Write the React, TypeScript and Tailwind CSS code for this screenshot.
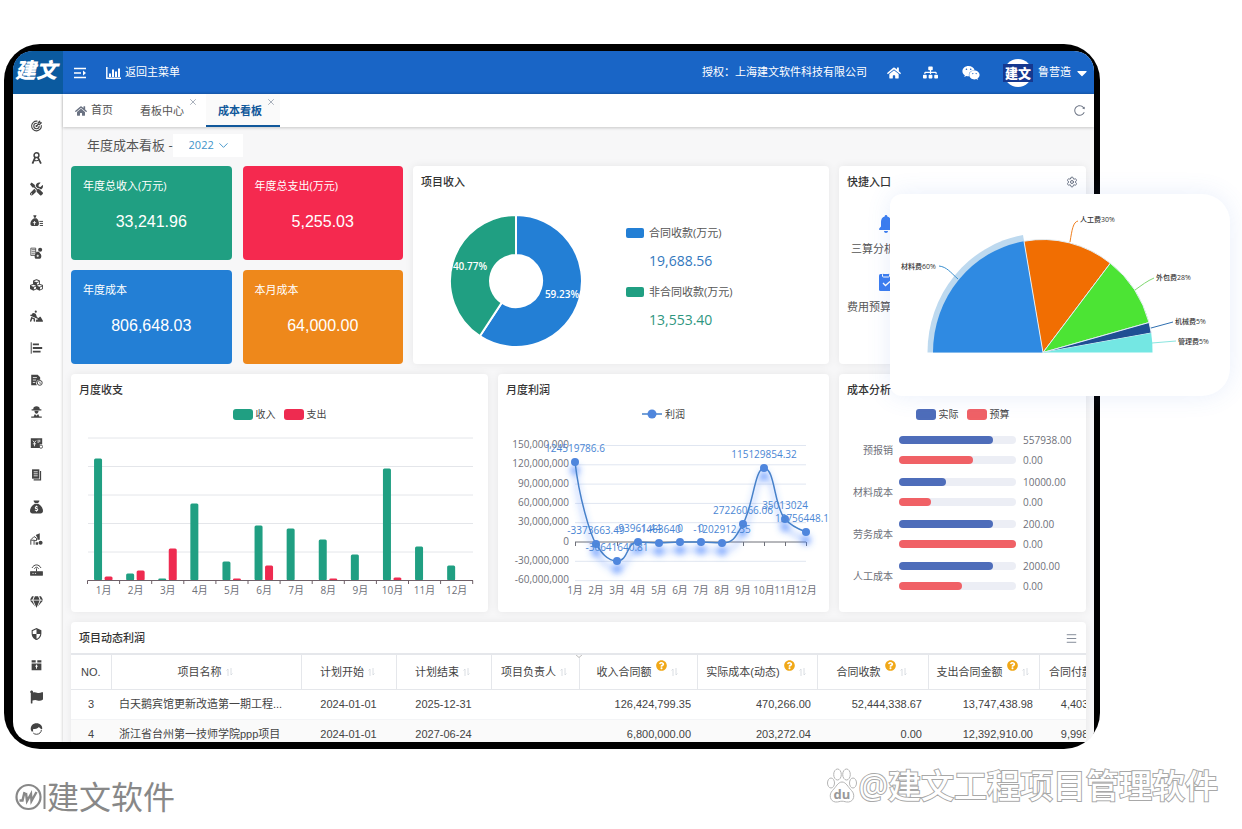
import React, { useState } from 'react';
import {
  FaCaretDown,
  FaCubes,
  FaFlag,
  FaGem,
  FaHome,
  FaQuestionCircle,
  FaSitemap,
  FaTools,
  FaWeixin,
} from 'react-icons/fa';
import { FaPersonDigging, FaSackDollar } from 'react-icons/fa6';
import { MdSecurity } from 'react-icons/md';
import { TbTargetArrow } from 'react-icons/tb';
import { AiOutlineReload } from 'react-icons/ai';
import { ChevronDown, Menu, Settings, X } from 'lucide-react';

type IconProps = { className?: string };

function CompassIcon({ className }: IconProps) {
  return (
    <svg viewBox="0 0 16 16" className={className} fill="none" stroke="currentColor">
      <circle cx="8" cy="4.500" r="3" strokeWidth="1.800" />
      <path d="M6.500 7L3 15M9.500 7l4 8" strokeWidth="2.200" />
      <path d="M4.500 10.500c2 1.200 5 1 7-.5" strokeWidth="1.300" />
    </svg>
  );
}

function MoneyListIcon({ className }: IconProps) {
  return (
    <svg viewBox="0 0 16 16" className={className} fill="currentColor">
      <path d="M4 1h4L7 4h-2zM5 4.500h3C10 6 11 8.500 11 11c0 2-1 3-2 3H3c-2 0-2.500-1.500-2.500-3C.5 8.500 2.500 6 5 4.500z" />
      <path d="M3.500 10h4M5.500 8v5" stroke="#fff" strokeWidth="1" />
      <path d="M11.500 8.500H16M12 11h4M12 13.500h4" stroke="currentColor" strokeWidth="1.200" />
    </svg>
  );
}

function LedgerBagIcon({ className }: IconProps) {
  return (
    <svg viewBox="0 0 16 16" className={className} fill="currentColor">
      <path d="M1 2h6v9H1zM2 4h5M2 6.500h5M2 9h4" fill="none" stroke="currentColor" />
      <path d="M8 6.500h3l1.500 2c2 1.500 2 6-.5 6.500H7c-2-1-1.500-5 0-6.500z" />
      <circle cx="12.500" cy="4" r="2.500" />
      <path d="M8 11.500h3M9.500 10v3" stroke="#fff" />
    </svg>
  );
}

function BarListIcon({ className }: IconProps) {
  return (
    <svg viewBox="0 0 16 16" className={className} fill="none" stroke="currentColor">
      <path d="M1.500 1v14" strokeWidth="1.200" />
      <path d="M3.500 3.500H11M3.500 8H15M3.500 12.500H13" strokeWidth="2.200" />
    </svg>
  );
}

function DocClockIcon({ className }: IconProps) {
  return (
    <svg viewBox="0 0 16 16" className={className} fill="currentColor">
      <path d="M1.500 1.500h8l3 3V8a4 4 0 0 0-4 6.500h-7z" />
      <path d="M3.500 5h5M3.500 8h4M3.500 11h3" stroke="#fff" />
      <circle cx="12" cy="11.500" r="3" fill="none" stroke="currentColor" strokeWidth="1.200" />
      <path d="M12 10v2h1.500" fill="none" stroke="currentColor" strokeWidth=".8" />
    </svg>
  );
}

function WorkerIcon({ className }: IconProps) {
  return (
    <svg viewBox="0 0 16 16" className={className} fill="currentColor">
      <path d="M4 4.500C4 2 5.500 1 8 1s4 1 4 3.500h2V6H2V4.500z" />
      <path d="M5.500 6.500h5c0 2-1 3.500-2.500 3.500S5.500 8.500 5.500 6.500zM1.500 15v-1.500h3l1.500-3 2 2 2-2 1.500 3h3V15z" />
    </svg>
  );
}

function BoardIcon({ className }: IconProps) {
  return (
    <svg viewBox="0 0 16 16" className={className} fill="currentColor">
      <path d="M1 2h14v7.500h-3V14H1z" />
      <path d="M3.500 5l2 2.500 2-2.500M5.500 7.500V12M3.500 9h4M10 4v4M12 4v3" stroke="#fff" fill="none" />
      <circle cx="13.500" cy="12.500" r="2" fill="none" stroke="currentColor" />
    </svg>
  );
}

function DocStackIcon({ className }: IconProps) {
  return (
    <svg viewBox="0 0 16 16" className={className} fill="currentColor">
      <path d="M2.500 1h9v11.500h-9z" />
      <path d="M13 3v11H4.500" fill="none" stroke="currentColor" strokeWidth="1.400" />
      <path d="M4.500 4h5M4.500 6.500h5M4.500 9h5" stroke="#fff" />
    </svg>
  );
}

function SiteIcon({ className }: IconProps) {
  return (
    <svg viewBox="0 0 16 16" className={className} fill="currentColor">
      <path d="M1 15V9l4-4 3 2v3H5v5M1.500 9.500h4" fill="none" stroke="currentColor" strokeWidth="1.200" />
      <path d="M7 3l5-2v8H9V6z" />
      <path d="M7 12h3v3H7z" />
      <circle cx="13" cy="12.500" r="2.500" />
    </svg>
  );
}

function RouterIcon({ className }: IconProps) {
  return (
    <svg viewBox="0 0 16 16" className={className} fill="none" stroke="currentColor">
      <path d="M.5 10h15v4.500H.5z" fill="currentColor" />
      <path d="M8 6v4M2.500 5.500c2.500-5 8.500-5 11 0M5.500 6.500c1-2.500 4-2.500 5 0" strokeWidth="1.200" />
      <path d="M3 12.200h1.500M6 12.200h1.500" stroke="#fff" />
    </svg>
  );
}

function LockBoxIcon({ className }: IconProps) {
  return (
    <svg viewBox="0 0 16 16" className={className} fill="currentColor">
      <path d="M2 2h5v3H2zM9 2h5v3H9zM2 6h12v8.500H2z" />
      <path d="M8 7.500v5M6.500 9.500h3" stroke="#fff" strokeWidth="1.200" />
    </svg>
  );
}

function ServiceIcon({ className }: IconProps) {
  return (
    <svg viewBox="0 0 16 16" className={className} fill="currentColor">
      <path d="M1 9C.5 4 3.500 1 8 1s7.500 3 7 7c-1.500 0-3-1-4-2.500C9.500 7.500 6 8 4 8c-.5 1-.5 2 0 3H2z" />
      <path d="M14 9c0 3-2.500 5.500-6 5.500-1.500 0-3-.5-4-1.500" fill="none" stroke="currentColor" strokeWidth="1.200" />
    </svg>
  );
}

function CollapseIcon({ className }: IconProps) {
  return (
    <svg viewBox="0 0 12 12" className={className} fill="none" stroke="currentColor" strokeWidth="1.500">
      <path d="M0 1.500h12M0 6h7M0 10.500h12" />
      <path d="M9 3.500L12 6 9 8.500z" fill="currentColor" stroke="none" />
    </svg>
  );
}

function ColumnChartIcon({ className }: IconProps) {
  return (
    <svg viewBox="0 0 15 12" className={className} fill="none" stroke="currentColor">
      <path d="M.8 0v11.200H15" strokeWidth="1.400" />
      <path d="M4 10V6.500M7 10V2.500M10 10V4.500M13 10V1.500" strokeWidth="2" />
    </svg>
  );
}

function BellIcon({ className }: IconProps) {
  return (
    <svg viewBox="0 0 14 18" className={className} fill="currentColor">
      <path d="M7 0c.8 0 1.300.6 1.300 1.400C11 2 12 4.200 12 7v4.500l1.800 2V15H.2v-1.500l1.800-2V7c0-2.800 1-5 3.700-5.600C5.700.6 6.200 0 7 0zM5 16h4c0 1.200-.9 2-2 2s-2-.8-2-2z" />
    </svg>
  );
}

function ClipboardIcon({ className }: IconProps) {
  return (
    <svg viewBox="0 0 14 18" className={className}>
      <rect y="1" width="14" height="17" rx="1.500" fill="currentColor" />
      <rect x="3.500" y=".5" width="7" height="3.500" rx="1" fill="currentColor" stroke="#fff" />
      <path d="M4 10l2.500 2.500L11 8.500" fill="none" stroke="#fff" strokeWidth="1.300" />
    </svg>
  );
}

function SortIcon() {
  return (
    <svg viewBox="0 0 7 8" className="w-[7px] h-2 shrink-0 text-gray-300" fill="none" stroke="currentColor" strokeWidth=".8">
      <path d="M2 8V1L.5 2.500M5 0v7l1.500-1.500" />
    </svg>
  );
}

const sideIcons = [
  { name: '目标', icon: TbTargetArrow },
  { name: '设计', icon: CompassIcon },
  { name: '工具', icon: FaTools },
  { name: '资金', icon: MoneyListIcon },
  { name: '台账', icon: LedgerBagIcon },
  { name: '物资', icon: FaCubes },
  { name: '施工', icon: FaPersonDigging },
  { name: '进度', icon: BarListIcon },
  { name: '工时', icon: DocClockIcon },
  { name: '劳务', icon: WorkerIcon },
  { name: '预算', icon: BoardIcon },
  { name: '合同', icon: DocStackIcon },
  { name: '成本', icon: FaSackDollar },
  { name: '现场', icon: SiteIcon },
  { name: '设备', icon: RouterIcon },
  { name: '质量', icon: FaGem },
  { name: '安全', icon: MdSecurity },
  { name: '档案', icon: LockBoxIcon },
  { name: '节点', icon: FaFlag },
  { name: '客服', icon: ServiceIcon },
];

const kpis = [
  { title: '年度总收入(万元)', value: '33,241.96', color: 'bg-[#209f82]' },
  { title: '年度总支出(万元)', value: '5,255.03', color: 'bg-[#f5294f]' },
  { title: '年度成本', value: '806,648.03', color: 'bg-[#237fd5]' },
  { title: '本月成本', value: '64,000.00', color: 'bg-[#ee881b]' },
];

const months = ['1月', '2月', '3月', '4月', '5月', '6月', '7月', '8月', '9月', '10月', '11月', '12月'];

const income = [122, 7, 2, 77, 19, 55, 52, 41, 26, 112, 34, 15];
const expense = [4, 10, 32, 0, 2, 15, 0, 2, 0.5, 3, 0.5, 0.5];

const profitTicks = [
  '150,000,000',
  '120,000,000',
  '90,000,000',
  '60,000,000',
  '30,000,000',
  '0',
  '-30,000,000',
  '-60,000,000',
];

const profits = [
  { y: 60, label: '124519786.6' },
  { y: 142, label: '-3373663.49' },
  { y: 159, label: '-30641640.81' },
  { y: 140, label: '-93961.44' },
  { y: 141, label: '-1463640' },
  { y: 140, label: '0' },
  { y: 140, label: '0' },
  { y: 141, label: '-1202912.35' },
  { y: 122, label: '27226066.06' },
  { y: 66, label: '115129854.32' },
  { y: 117, label: '35013024' },
  { y: 130, label: '13756448.1' },
];

const costs = [
  { name: '预报销', actual: 80, budget: 63, value: '557938.00' },
  { name: '材料成本', actual: 40, budget: 27, value: '10000.00' },
  { name: '劳务成本', actual: 80, budget: 100, value: '200.00' },
  { name: '人工成本', actual: 80, budget: 54, value: '2000.00' },
];

const columns = [
  { title: '项目名称', width: 190 },
  { title: '计划开始', width: 95 },
  { title: '计划结束', width: 95 },
  { title: '项目负责人', width: 88 },
  { title: '收入合同额', width: 118, help: true },
  { title: '实际成本(动态)', width: 120, help: true },
  { title: '合同收款', width: 111, help: true },
  { title: '支出合同金额', width: 111, help: true },
  { title: '合同付款', width: 92, help: true },
];

const rows = [
  ['3', '白天鹅宾馆更新改造第一期工程...', '2024-01-01', '2025-12-31', '', '126,424,799.35', '470,266.00', '52,444,338.67', '13,747,438.98', '4,403,210.00'],
  ['4', '浙江省台州第一技师学院ppp项目', '2024-01-01', '2027-06-24', '', '6,800,000.00', '203,272.04', '0.00', '12,392,910.00', '9,998,100.00'],
];

function Card({ title, action, className, children }: {
  title: string;
  action?: React.ReactNode;
  className?: string;
  children?: React.ReactNode;
}) {
  return (
    <section className={`min-w-0 bg-white rounded-sm shadow-[0_0_8px_rgba(0,0,0,0.07)] ${className ?? ''}`}>
      <div className="flex items-center justify-between px-2 pt-2">
        <h2 className="text-[11px] leading-4 font-medium text-[#333]">{title}</h2>
        {action}
      </div>
      {children}
    </section>
  );
}

function Header() {
  return (
    <header className="flex items-center h-[43px] shrink-0 bg-[#1965c6] text-white text-[11px]">
      <div className="w-[50px] h-full shrink-0 bg-[#0b5a9f] flex justify-center pt-1 pr-1">
        <span className="text-[21px] leading-[30px] font-black italic">建文</span>
      </div>
      <button type="button" aria-label="折叠菜单" className="ml-[11px]">
        <CollapseIcon className="w-3 h-3" />
      </button>
      <a href="#menu" className="ml-5 flex items-center gap-1">
        <ColumnChartIcon className="w-[15px] h-3" />
        返回主菜单
      </a>
      <div className="ml-auto mr-[7px] flex items-center">
        <span>授权：上海建文软件科技有限公司</span>
        <a href="#home" aria-label="首页" className="ml-5"><FaHome size={14} /></a>
        <a href="#org" aria-label="组织架构" className="ml-[22px]"><FaSitemap size={15} /></a>
        <a href="#wechat" aria-label="微信" className="ml-6"><FaWeixin size={18} /></a>
        <button type="button" className="ml-6 flex items-center gap-1.5">
          <span className="w-7 h-7 rounded-full bg-white flex items-center justify-center">
            <span className="bg-[#15388f] text-[13px] leading-[18px] font-black whitespace-nowrap px-0.5">建文</span>
          </span>
          鲁营造
          <FaCaretDown className="w-2.5 h-4" />
        </button>
      </div>
    </header>
  );
}

function Tabs() {
  const [active, setActive] = useState('成本看板');
  return (
    <nav className="relative z-10 flex items-center gap-1 h-[33px] shrink-0 bg-white text-[11px] text-[#555] shadow-[0_1px_3px_rgba(0,0,0,0.2)]">
      <a href="#home" className="flex items-center gap-1 pl-3 pr-[11px]">
        <FaHome size={12} className="text-gray-500" />
        首页
      </a>
      {['看板中心', '成本看板'].map((tab) => (
        <div
          key={tab}
          className={
            tab === active
              ? 'flex h-full pl-3 pr-1 gap-1 pt-[3px] border-b-2 border-[#11589b] bg-[#fafafa] text-[#11589b] font-bold'
              : 'flex h-full pl-3 pr-1 gap-1 pt-[3px] border-b-2 border-transparent'
          }
        >
          <button type="button" onClick={() => setActive(tab)}>{tab}</button>
          <button type="button" aria-label={`关闭${tab}`} className="self-start text-gray-400">
            <X size={10} strokeWidth={2} />
          </button>
        </div>
      ))}
      <button type="button" aria-label="刷新" className="ml-auto mr-2 text-gray-500">
        <AiOutlineReload size={13} />
      </button>
    </nav>
  );
}

function IncomeDonut() {
  return (
    <div className="flex items-start gap-[43px] pl-9 pt-6">
      <svg viewBox="-67 -67 134 134" className="w-[134px] h-[134px] shrink-0" stroke="#fff" strokeWidth="2">
        <path d="M0 -66A66 66 0 1 1 -36.200 55.200L-14.300 21.700A26 26 0 1 0 0 -26Z" fill="#237fd5" />
        <path d="M-36.200 55.200A66 66 0 0 1 0 -66V-26A26 26 0 0 0 -14.300 21.700Z" fill="#209f82" />
        <g fill="#fff" stroke="none" className="text-[10px] font-semibold" textAnchor="middle">
          <text x="-46" y="-11">40.77%</text>
          <text x="46" y="17">59.23%</text>
        </g>
      </svg>
      <dl className="pt-[11px] text-[11px] leading-4 text-[#555]">
        <dt className="flex items-center gap-[5px]">
          <span className="w-[18px] h-2.5 rounded-[2px] bg-[#237fd5]" />
          合同收款(万元)
        </dt>
        <dd className="pl-[23px] mt-2.5 text-sm text-[#3278be]">19,688.56</dd>
        <dt className="flex items-center gap-[5px] mt-[13px]">
          <span className="w-[18px] h-2.5 rounded-[2px] bg-[#209f82]" />
          非合同收款(万元)
        </dt>
        <dd className="pl-[23px] mt-2.5 text-sm text-[#2f9680]">13,553.40</dd>
      </dl>
    </div>
  );
}

function Legend({ items }: { items: { name: string; color: string }[] }) {
  return (
    <div className="flex justify-center gap-2 mt-2 text-[10px] leading-4 text-[#444]">
      {items.map((item) => (
        <span key={item.name} className="flex items-center gap-[3px]">
          <span className={`w-5 h-[11px] rounded-[3px] ${item.color}`} />
          {item.name}
        </span>
      ))}
    </div>
  );
}

function MonthlyBars() {
  const step = 32.1;
  return (
    <svg viewBox="0 0 417 190" className="block w-full">
      {[16, 44.5, 73, 101.5, 130].map((y) => (
        <path key={y} d={`M17 ${y}H402`} stroke="#e4e6ea" />
      ))}
      {months.map((month, i) => {
        const x = 16.5 + step * (i + 0.5);
        return (
          <g key={month}>
            <rect x={x - 9.5} y={158.5 - income[i]} width="8" height={income[i]} rx="1.5" fill="#209f82" />
            <rect x={x + 1} y={158.5 - expense[i]} width="8" height={expense[i]} rx="1.5" fill="#ee2b50" />
            <text x={x} y="172" textAnchor="middle" className="text-[10px]" fill="#6e7079">{month}</text>
          </g>
        );
      })}
      <path d="M16.500 158.500H402" stroke="#6e6068" />
      {Array.from({ length: 13 }, (_, i) => (
        <path key={i} d={`M${16.5 + step * i} 158.500v3.500`} stroke="#6e6068" />
      ))}
    </svg>
  );
}

function ProfitLine() {
  return (
    <svg viewBox="0 0 331 190" className="block w-full">
      <defs>
        <filter id="glow" x="-10%" y="-20%" width="120%" height="150%">
          <feDropShadow dx="0" dy="8" stdDeviation="3.500" floodColor="#3c7dff" floodOpacity="0.9" />
        </filter>
      </defs>
      {profitTicks.map((tick, i) => (
        <g key={tick}>
          <path d={`M77 ${23.5 + i * 19.3}H308`} stroke={tick === '0' ? '#6e7079' : '#e0e6f1'} />
          <text x="71" y={26 + i * 19.3} textAnchor="end" className="text-[10px]" fill="#6e7079">{tick}</text>
        </g>
      ))}
      {months.map((month, i) => (
        <g key={month}>
          <path d={`M${77.5 + i * 21} 120v4`} stroke="#6e7079" />
          <text x={77 + i * 21} y="172" textAnchor="middle" className="text-[10px]" fill="#6e7079">{month}</text>
        </g>
      ))}
      <g filter="url(#glow)" transform="translate(0 -20)">
        <path
          d="M77 60C81 95 92 132 98 142C103 150 109 159 119 159C131 159 128 140 140 140L161 141L182 140L203 140L224 141C236 141 238 134 245 122C255 104 257 66 266 66C277 66 276 105 287 117C293 124 300 127 308 130"
          fill="none"
          stroke="#4681c9"
          strokeWidth="1.500"
        />
        {profits.map((point, i) => (
          <circle key={i} cx={77 + i * 21} cy={point.y} r="4" fill="#4f86dd" />
        ))}
      </g>
      <g className="text-[10px]" fill="#4a86d4" textAnchor="middle">
        {profits.map((point, i) => (
          <text key={i} x={i === 11 ? 304 : 77 + i * 21} y={point.y - 30}>{point.label}</text>
        ))}
      </g>
    </svg>
  );
}

function CostBars() {
  return (
    <ul className="pt-[7px] text-[10px] text-[#6e7079]">
      {costs.map((cost) => (
        <li key={cost.name} className="flex items-center h-[42px]">
          <span className="w-[54px] shrink-0 text-right leading-4">{cost.name}</span>
          <div className="ml-1.5 flex-1 pr-[15px]">
            <div className="flex items-center h-5 gap-[7px]">
              <div className="flex-1 h-2 rounded-full bg-[#eceef5]">
                <div className="h-2 rounded-full bg-[#4e6dba]" style={{ width: `${cost.actual}%` }} />
              </div>
              <span className="w-12">{cost.value}</span>
            </div>
            <div className="flex items-center h-5 gap-[7px]">
              <div className="flex-1 h-2 rounded-full bg-[#eceef5]">
                <div className="h-2 rounded-full bg-[#f06166]" style={{ width: `${cost.budget}%` }} />
              </div>
              <span className="w-12">0.00</span>
            </div>
          </div>
        </li>
      ))}
    </ul>
  );
}

function ProjectTable() {
  return (
    <div className="relative mt-[7px] overflow-hidden border-t-2 border-gray-200">
      <svg viewBox="0 0 8 4" className="absolute left-1/2 -top-px -ml-1 w-2 h-1" fill="#fff" stroke="#bbb">
        <path d="M0 0l4 3.500L8 0" />
      </svg>
      <table className="w-[1060px] min-w-full table-fixed border-collapse font-['Liberation_Sans','Noto_Sans_CJK_SC',sans-serif] text-[11px] text-[#444]">
        <colgroup>
          <col style={{ width: 40 }} />
          {columns.map((col) => (
            <col key={col.title} style={{ width: col.width }} />
          ))}
        </colgroup>
        <thead>
          <tr className="h-[34px] border-b border-gray-200">
            <th className="p-0 font-normal border-r border-gray-200">NO.</th>
            {columns.map((col) => (
              <th key={col.title} className="p-0 font-normal border-r border-gray-200 whitespace-nowrap">
                <span className="flex items-center justify-center gap-1 pr-0.5">
                  {col.title}
                  {col.help && <FaQuestionCircle size={11} className="mb-3 shrink-0 text-[#f0a818]" />}
                  <SortIcon />
                </span>
              </th>
            ))}
          </tr>
        </thead>
        <tbody>
          {rows.map((row) => (
            <tr key={row[0]} className="h-[30px] border-b border-gray-100 even:bg-[#fafafa]">
              {row.map((cell, i) => (
                <td
                  key={i}
                  className={
                    i === 1
                      ? 'px-2 whitespace-nowrap'
                      : i > 4
                        ? 'pr-1.5 text-right'
                        : 'text-center'
                  }
                >
                  {cell}
                </td>
              ))}
            </tr>
          ))}
        </tbody>
      </table>
    </div>
  );
}

function CostPiePopup() {
  return (
    <aside className="absolute top-[194px] right-3 w-[340px] rounded-[28px] rounded-l-xl bg-white shadow-[0_0_24px_rgba(70,120,220,0.12)]">
      <svg viewBox="890 194 340 202" className="block w-full">
        <g transform="translate(1043 352.500)">
          <path d="M0 0H-115.500A115.500 119 0 0 1 -20 -117.500Z" fill="#bdd9ef" />
          <g stroke="#e3eef5" strokeWidth="1">
            <path d="M0 0H-110A110 113 0 0 1 -19 -111.300Z" fill="#2f8ae2" stroke="none" />
            <path d="M0 0L-19 -111.300A110 113 0 0 1 67.300 -89.300Z" fill="#f16e02" />
            <path d="M0 0L67.300 -89.300A110 113 0 0 1 106 -30Z" fill="#4ce434" />
            <path d="M0 0L106 -30A110 113 0 0 1 108.200 -19.500Z" fill="#1f4f93" />
            <path d="M0 0L108.200 -19.500A110 113 0 0 1 109.500 0Z" fill="#74e7e3" stroke="none" />
          </g>
        </g>
        <g fill="none" strokeWidth="1">
          <path d="M1070 242C1072 230 1073 222 1078 221" stroke="#f08020" />
          <path d="M939 266C947 267 950 272 958 279" stroke="#3a8fcf" />
          <path d="M1135 290C1142 285 1147 281 1154 278" stroke="#7fd870" />
          <path d="M1151 328L1173 322" stroke="#2f6fb0" />
          <path d="M1152 343L1176 341" stroke="#8ae5e0" />
        </g>
        <g className="text-[7px] font-medium" fill="#333">
          <text x="1080" y="222">人工费30%</text>
          <text x="901" y="269">材料费60%</text>
          <text x="1156" y="280">外包费28%</text>
          <text x="1175" y="324">机械费5%</text>
          <text x="1178" y="344">管理费5%</text>
        </g>
      </svg>
    </aside>
  );
}

function Footer() {
  return (
    <footer className="flex justify-between h-20 shrink-0 pl-[15px] pr-6">
      <div className="flex items-center pt-4 text-[#888]">
        <svg viewBox="0 0 32 28" className="w-8 h-7" fill="none" stroke="currentColor">
          <circle cx="13.500" cy="14" r="12" strokeWidth="2.200" />
          <path d="M9.500 9l-2 8.500H4.500M11 10l1 8 4-7 .5 7 5-9" strokeWidth="2.400" />
          <path d="M29.500 2v24" strokeWidth="2" />
        </svg>
        <span className="text-[32px] leading-10">建文软件</span>
      </div>
      <div className="flex items-center pb-[7px]">
        <svg viewBox="0 0 32 36" className="w-8 h-9" fill="#fff" stroke="#b5b5b5">
          <ellipse cx="5" cy="15" rx="3.500" ry="5" />
          <ellipse cx="11.500" cy="6.500" rx="3.800" ry="5.500" />
          <ellipse cx="20.500" cy="6.500" rx="3.800" ry="5.500" />
          <ellipse cx="27" cy="15" rx="3.500" ry="5" />
          <path d="M16 14c4 0 6 5 9.500 8.500 4 4 2.500 11-3 11.500-3 .2-4-.8-6.500-.8s-3.500 1-6.500.8C4 33.500 2.500 26.500 6.500 22.500 10 19 12 14 16 14z" />
          <text x="16" y="31" textAnchor="middle" fill="#999" stroke="none" className="text-[13px] font-bold">du</text>
        </svg>
        <span className="text-[33px] leading-10 font-medium whitespace-nowrap text-white [-webkit-text-stroke:2px_#a8a8a8] [paint-order:stroke_fill]">
          @建文工程项目管理软件
        </span>
      </div>
    </footer>
  );
}

export default function App() {
  const [year, setYear] = useState('2022');

  return (
    <div className="relative flex flex-col h-screen overflow-hidden bg-white pt-11 font-['Open_Sans','Noto_Sans_CJK_SC',sans-serif]">
      <div className="flex-1 min-h-0 ml-1 mr-[142px] pt-[7px] pr-1.5 pb-[7px] pl-[9px] rounded-[36px] bg-black">
        <div className="flex flex-col h-full overflow-hidden rounded-[20px] rounded-br-[12px] bg-white">
          <Header />
          <div className="flex flex-1 min-h-0">
            <aside className="flex flex-col items-center justify-between w-[46px] shrink-0 pt-[25px] pb-1.5 text-[#444]">
              {sideIcons.map(({ name, icon: Icon }) => (
                <button key={name} type="button" aria-label={name}>
                  <Icon className="w-[13px] h-[14px]" />
                </button>
              ))}
            </aside>
            <div className="flex flex-col flex-1 min-w-0 ml-1 shadow-[0_0_3px_rgba(0,0,0,0.25)]">
              <Tabs />
              <main className="flex flex-col flex-1 min-h-0 gap-2.5 px-2 pt-[7px] bg-[#f7f7f8]">
                <div className="flex items-center pl-4 -mb-px">
                  <h1 className="text-[13px] leading-[23px] text-[#555]">年度成本看板 -</h1>
                  <label className="relative flex items-center bg-white text-[#3f93c9]">
                    <select
                      aria-label="年度"
                      value={year}
                      onChange={(e) => setYear(e.target.value)}
                      className="appearance-none w-[70px] h-[23px] pl-4 text-[11px] bg-transparent"
                    >
                      <option>2022</option>
                      <option>2023</option>
                      <option>2024</option>
                    </select>
                    <ChevronDown size={15} strokeWidth={1.5} className="absolute right-3 pointer-events-none" />
                  </label>
                </div>

                <div className="flex gap-2.5 shrink-0">
                  <div className="flex-[332] min-w-0 grid grid-cols-2 gap-x-[11px] gap-y-2.5">
                    {kpis.map((kpi) => (
                      <div key={kpi.title} className={`h-[94px] rounded-sm px-3 pt-3 text-white ${kpi.color}`}>
                        <div className="text-[11px] leading-4">{kpi.title}</div>
                        <div className="mt-4 text-center text-base leading-6 font-['Liberation_Sans',sans-serif]">{kpi.value}</div>
                      </div>
                    ))}
                  </div>
                  <Card title="项目收入" className="flex-[416]">
                    <IncomeDonut />
                  </Card>
                  <Card
                    title="快捷入口"
                    className="flex-[247]"
                    action={
                      <button type="button" aria-label="设置" className="text-gray-500">
                        <Settings size={12} />
                      </button>
                    }
                  >
                    <div className="flex flex-col items-start pl-2 pt-[25px] text-[11px] leading-4 text-[#555]">
                      <a href="#analysis" className="pl-1">
                        <BellIcon className="w-3.5 h-[18px] ml-7 mb-2 text-[#3b7df0]" />
                        三算分析
                      </a>
                      <a href="#budget" className="mt-4">
                        <ClipboardIcon className="w-3.5 h-[18px] ml-8 mb-2 text-[#3b7df0]" />
                        费用预算明细
                      </a>
                    </div>
                  </Card>
                </div>

                <div className="flex gap-2.5 shrink-0">
                  <Card title="月度收支" className="flex-[417]">
                    <Legend items={[{ name: '收入', color: 'bg-[#209f82]' }, { name: '支出', color: 'bg-[#ee2b50]' }]} />
                    <MonthlyBars />
                  </Card>
                  <Card title="月度利润" className="flex-[331]">
                    <div className="flex items-center justify-center gap-[3px] mt-2 text-[10px] leading-4 text-[#444]">
                      <svg viewBox="0 0 20 10" className="w-5 h-2.5">
                        <path d="M0 5h20" stroke="#4681c9" strokeWidth="1.500" />
                        <circle cx="10" cy="5" r="4.500" fill="#4f86dd" />
                      </svg>
                      利润
                    </div>
                    <ProfitLine />
                  </Card>
                  <Card title="成本分析" className="flex-[247]">
                    <Legend items={[{ name: '实际', color: 'bg-[#4e6dba]' }, { name: '预算', color: 'bg-[#f06166]' }]} />
                    <CostBars />
                  </Card>
                </div>

                <Card
                  title="项目动态利润"
                  className="shrink-0"
                  action={
                    <button type="button" aria-label="更多" className="text-gray-500">
                      <Menu size={13} strokeWidth={1.5} />
                    </button>
                  }
                >
                  <ProjectTable />
                </Card>
              </main>
            </div>
          </div>
        </div>
      </div>
      <Footer />
      <CostPiePopup />
    </div>
  );
}
